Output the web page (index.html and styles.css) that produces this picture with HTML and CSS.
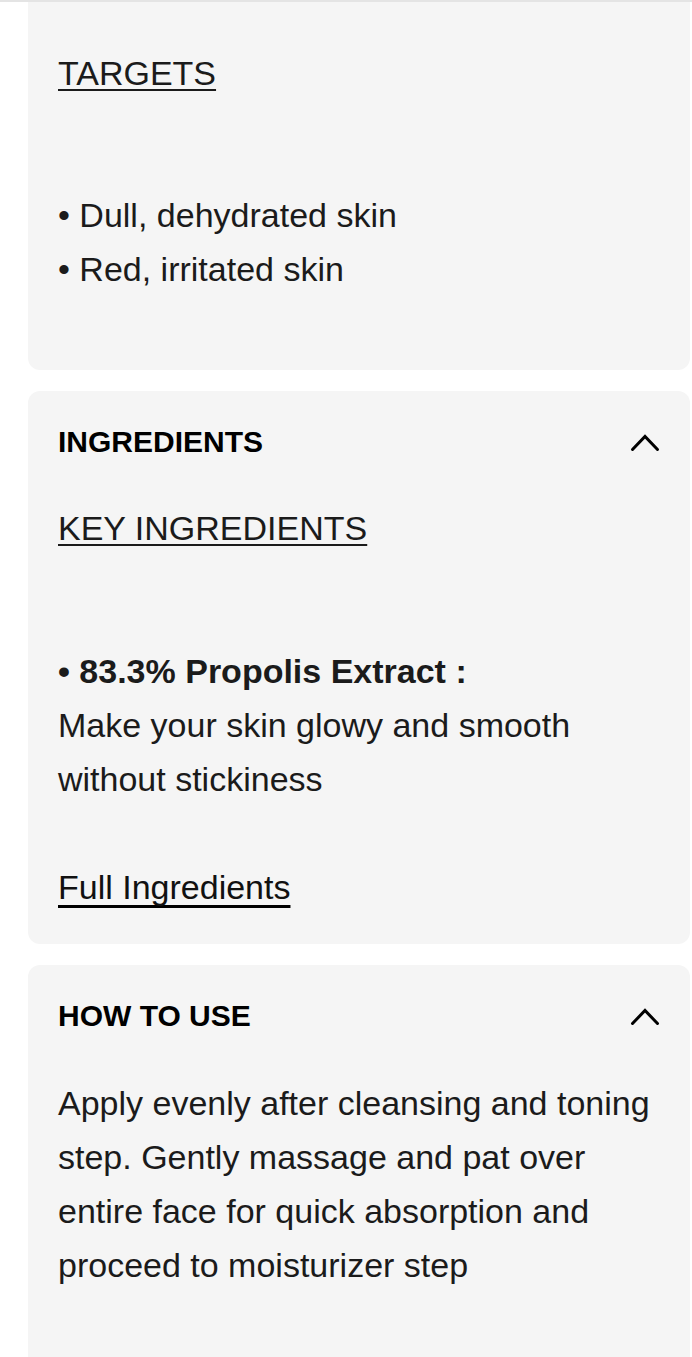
FILE: index.html
```html
<!DOCTYPE html>
<html lang="en">
<head>
<meta charset="utf-8">
<title>Product details</title>
<link rel="stylesheet" href="styles.css">
</head>
<body>
<div class="topline"></div>
<div class="stack">
  <section class="card card-first">
    <p class="sub">TARGETS</p>
    <div class="list">
      <p>• Dull, dehydrated skin</p>
      <p>• Red, irritated skin</p>
    </div>
  </section>

  <section class="card">
    <div class="head">
      <h2>INGREDIENTS</h2>
      <svg class="chev" width="30" height="18" viewBox="0 0 30 18" aria-hidden="true"><path d="M2.5 15.5 L15 2.5 L27.5 15.5" fill="none" stroke="#000" stroke-width="3" stroke-linecap="round" stroke-linejoin="miter"/></svg>
    </div>
    <p class="sub sub-gap">KEY INGREDIENTS</p>
    <div class="key">
      <p class="bold">• 83.3% Propolis Extract :</p>
      <p>Make your skin glowy and smooth without stickiness</p>
    </div>
    <p class="full"><a href="#">Full Ingredients</a></p>
  </section>

  <section class="card card-last">
    <div class="head">
      <h2>HOW TO USE</h2>
      <svg class="chev" width="30" height="18" viewBox="0 0 30 18" aria-hidden="true"><path d="M2.5 15.5 L15 2.5 L27.5 15.5" fill="none" stroke="#000" stroke-width="3" stroke-linecap="round" stroke-linejoin="miter"/></svg>
    </div>
    <p class="howto">Apply evenly after cleansing and toning step. Gently massage and pat over entire face for quick absorption and proceed to moisturizer step</p>
  </section>
</div>
</body>
</html>
```

FILE: styles.css
```css
* { box-sizing: border-box; }

html, body {
  margin: 0;
  padding: 0;
  background: #ffffff;
}

body {
  font-family: "Liberation Sans", Arial, Helvetica, sans-serif;
  color: #1b1b1b;
  font-size: 34px;
  line-height: 54px;
}

p { margin: 0; }

.topline {
  height: 2px;
  background: #e4e4e4;
}

.stack {
  display: flex;
  flex-direction: column;
  gap: 21px;
  padding: 0 2px 0 28px;
}

.card {
  background: #f5f5f5;
  border-radius: 12px;
  padding: 30px 30px 30px 30px;
}

.card-first {
  border-radius: 0 0 12px 12px;
  padding-top: 44px;
  padding-bottom: 74px;
}

.card-last {
  border-radius: 12px 12px 0 0;
  padding-bottom: 90px;
}

.sub {
  text-decoration: underline;
  text-decoration-thickness: 2px;
  text-underline-offset: 4px;
  text-decoration-skip-ink: none;
}

.sub-gap { margin-top: 38px; }

.list { margin-top: 88px; }

.head {
  display: flex;
  align-items: center;
  justify-content: space-between;
  height: 42px;
}

.head h2 {
  margin: 0;
  font-size: 30px;
  line-height: 42px;
  font-weight: 700;
  color: #000;
}

.chev {
  display: block;
  margin-top: 2px;
}

.key { margin-top: 89px; }

.bold { font-weight: 700; }

.full { margin-top: 54px; }

.full a {
  color: #111;
  text-decoration: underline;
  text-decoration-color: #000;
  text-decoration-thickness: 3px;
  text-underline-offset: 6px;
  text-decoration-skip-ink: none;
}

.howto { margin-top: 39px; }
```
